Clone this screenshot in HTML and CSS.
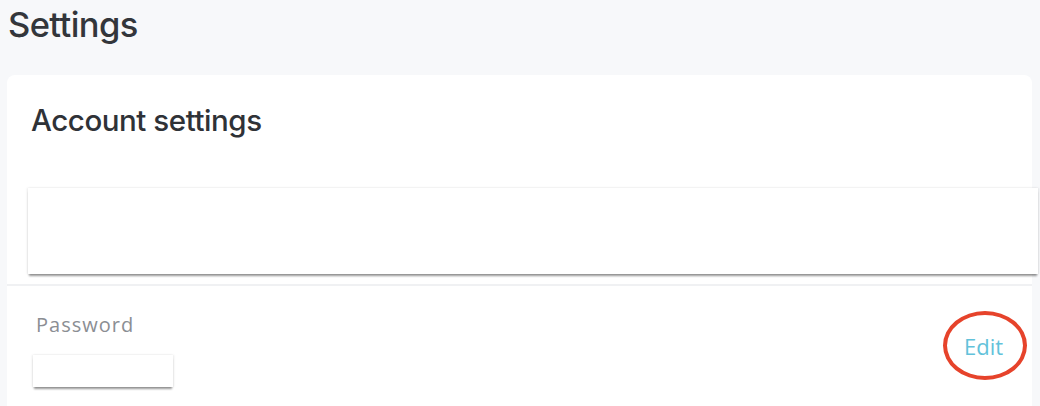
FILE: index.html
```html
<!DOCTYPE html>
<html lang="en">
<head>
<meta charset="utf-8">
<title>Settings</title>
<link rel="stylesheet" href="styles.css">
</head>
<body>
<main class="page">
  <h1 class="page-title">Settings</h1>
  <section class="card">
    <h2 class="card-title">Account settings</h2>
    <div class="blank-panel"></div>
    <div class="divider"></div>
    <div class="field-row">
      <div class="field">
        <div class="field-label">Password</div>
        <div class="field-value"></div>
      </div>
      <a class="edit-link" href="#">Edit</a>
    </div>
  </section>
</main>
</body>
</html>
```

FILE: styles.css
```css
html, body {
  margin: 0;
  padding: 0;
  height: 100%;
  background: #f7f8fa;
  overflow: hidden;
}

.page {
  display: flex;
  flex-direction: column;
  padding: 0 8px 0 7px;
}

.page-title {
  margin: 0;
  padding: 3px 0 0 1px;
  height: 75px;
  box-sizing: border-box;
  font-family: Inter, "Liberation Sans", sans-serif;
  font-weight: 500;
  font-size: 34.5px;
  line-height: 44px;
  letter-spacing: -0.6px;
  color: #33363b;
}

.card {
  background: #ffffff;
  border-radius: 8px 8px 0 0;
  display: flex;
  flex-direction: column;
  height: 340px;
}

.card-title {
  margin: 0;
  padding: 26px 0 0 24px;
  height: 113px;
  box-sizing: border-box;
  font-family: Inter, "Liberation Sans", sans-serif;
  font-weight: 500;
  font-size: 29.5px;
  line-height: 38px;
  letter-spacing: -0.45px;
  color: #2f3237;
}

.blank-panel {
  margin: 0 -6px 0 21px;
  height: 86px;
  background: #ffffff;
  box-shadow: 0 3px 2px -1px rgba(0, 0, 0, 0.4), 1px 0 2px rgba(0, 0, 0, 0.08), -1px 0 2px rgba(0, 0, 0, 0.08);
}

.divider {
  margin-top: 10px;
  height: 2px;
  background: #f0f1f3;
}

.field-row {
  display: flex;
  justify-content: space-between;
  align-items: flex-start;
  padding: 0 0 0 29px;
}

.field {
  display: flex;
  flex-direction: column;
}

.field-label {
  margin-top: 26px;
  font-family: "Open Sans", "Liberation Sans", sans-serif;
  font-size: 20px;
  line-height: 26px;
  letter-spacing: 1px;
  color: #8b8e93;
}

.field-value {
  margin: 17px 0 0 -3px;
  width: 140px;
  height: 32px;
  background: #ffffff;
  box-shadow: 0 3px 2px -1px rgba(0, 0, 0, 0.4), 1px 0 2px rgba(0, 0, 0, 0.08), -1px 0 2px rgba(0, 0, 0, 0.08);
}

.edit-link {
  margin: 25px 5px 0 0;
  width: 73px;
  height: 61px;
  border: 4px solid #e6432b;
  border-radius: 50%;
  display: flex;
  align-items: center;
  justify-content: center;
  padding-right: 3px;
  box-sizing: content-box;
  font-family: "Open Sans", "Liberation Sans", sans-serif;
  font-size: 22px;
  color: #62c2da;
  text-decoration: none;
}
```
